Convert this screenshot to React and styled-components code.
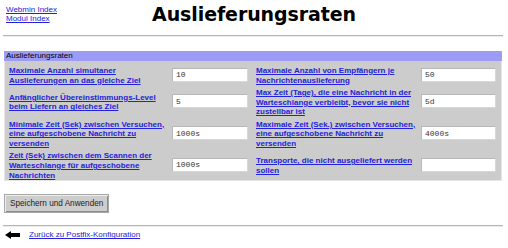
import React from 'react';
import styled, { createGlobalStyle } from 'styled-components';

const GlobalStyle = createGlobalStyle`
  body {
    margin: 0;
    background: #ffffff;
    font-family: "Liberation Sans", Arial, sans-serif;
    font-size: 8px;
    color: #000000;
  }
`;

const Page = styled.div`
  width: 500px;
  padding: 0 5px 0 3px;
`;

const Header = styled.div`
  display: grid;
  grid-template-columns: 1fr auto 1fr;
  align-items: start;
  padding-top: 3px;
`;

const TopLinks = styled.div`
  display: flex;
  flex-direction: column;
  padding: 2px 0 0 3px;
  line-height: 9px;
`;

const A = styled.a`
  color: #2222dd;
  text-decoration: underline;
  font-weight: ${(p) => (p.$bold ? 'bold' : 'normal')};
`;

const Title = styled.h1`
  margin: 0 0 0 2px;
  font-family: "DejaVu Sans", Verdana, sans-serif;
  font-weight: bold;
  font-size: 19px;
  line-height: 22px;
  letter-spacing: -0.1px;
`;

const Rule = styled.hr`
  margin: ${(p) => p.$m || '10px 0 0'};
  border: 0;
  border-top: 1px solid #b4b4b4;
  border-bottom: 1px solid #ececec;
  height: 0;
`;

const Section = styled.div`
  margin: 14px 0 0 1px;
  width: 498px;
`;

const SectionHead = styled.div`
  background: #9c9cf6;
  height: 10px;
  padding-left: 2px;
  line-height: 10px;
`;

const SectionBody = styled.div`
  background: #cccccc;
  border: 1px solid #e6e6e6;
  border-top: 0;
  padding: 5px 2px 0 4px;
  display: grid;
  grid-template-columns: 163px 84px 165px 1fr;
  row-gap: 2.5px;
  align-items: center;
`;

const Label = styled.div`
  line-height: 9.7px;
  padding-right: 3px;
`;

const Field = styled.input`
  box-sizing: border-box;
  width: ${(p) => p.$w || 76}px;
  height: 14px;
  margin-bottom: 2px;
  border: 1px solid #d8d8d8;
  border-top-color: #b8b8b8;
  border-left-color: #b8b8b8;
  background: #ffffff;
  padding: 0 0 0 3px;
  font-family: "Liberation Mono", "Courier New", monospace;
  font-size: 8px;
  color: #333333;
  outline: none;
`;

const SaveButton = styled.button`
  margin: 13px 0 0 1px;
  height: 19px;
  padding: 0 5px;
  background: #cdcdcd;
  border: 1px solid #a8a8a8;
  box-shadow: inset 1px 1px 0 #ececec, inset -1px -1px 0 #8c8c8c;
  font-family: "Liberation Sans", Arial, sans-serif;
  font-size: 8.2px;
  color: #222222;
`;

const Footer = styled.div`
  display: flex;
  align-items: center;
  gap: 9px;
  padding: 3px 0 0 2px;
`;

const BackArrow = () => (
  <svg width="15" height="8" viewBox="0 0 15 8">
    <polygon points="0,4 6,0 6,2 15,2 15,6 6,6 6,8" fill="#000" />
  </svg>
);

const rows = [
  [
    'Maximale Anzahl simultaner Auslieferungen an das gleiche Ziel',
    '10',
    'Maximale Anzahl von Empfängern je Nachrichtenauslieferung',
    '50',
  ],
  [
    'Anfänglicher Übereinstimmungs-Level beim Liefern an gleiches Ziel',
    '5',
    'Max Zeit (Tage), die eine Nachricht in der Warteschlange verbleibt, bevor sie nicht zustellbar ist',
    '5d',
  ],
  [
    'Minimale Zeit (Sek) zwischen Versuchen, eine aufgeschobene Nachricht zu versenden',
    '1000s',
    'Maximale Zeit (Sek.) zwischen Versuchen, eine aufgeschobene Nachricht zu versenden',
    '4000s',
  ],
  [
    'Zeit (Sek) zwischen dem Scannen der Warteschlange für aufgeschobene Nachrichten',
    '1000s',
    'Transporte, die nicht ausgeliefert werden sollen',
    '',
  ],
];

const App = () => {
  return (
    <Page>
      <GlobalStyle />
      <Header>
        <TopLinks>
          <A href="#">Webmin Index</A>
          <A href="#">Modul Index</A>
        </TopLinks>
        <Title>Auslieferungsraten</Title>
        <div />
      </Header>
      <Rule />
      <Section>
        <SectionHead>Auslieferungsraten</SectionHead>
        <SectionBody>
          {rows.map(([l1, v1, l2, v2]) => (
            <React.Fragment key={l1}>
              <Label>
                <A href="#" $bold>{l1}</A>
              </Label>
              <Field defaultValue={v1} />
              <Label>
                <A href="#" $bold>{l2}</A>
              </Label>
              <Field defaultValue={v2} $w={75} />
            </React.Fragment>
          ))}
        </SectionBody>
      </Section>
      <SaveButton>Speichern und Anwenden</SaveButton>
      <Rule $m="12px 0 0" />
      <Footer>
        <BackArrow />
        <A href="#">Zurück zu Postfix-Konfiguration</A>
      </Footer>
    </Page>
  );
};

export default App;
